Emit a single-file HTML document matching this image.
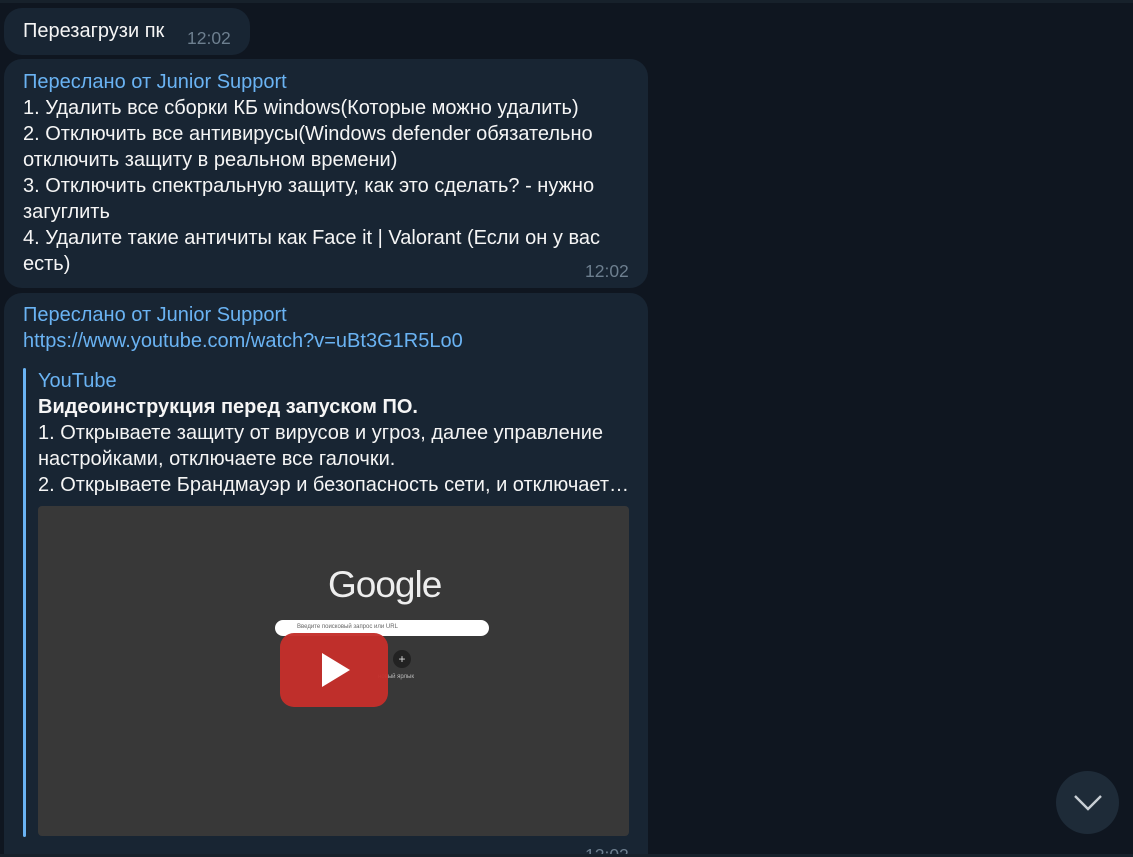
<!DOCTYPE html>
<html style="width:1133px;height:857px;overflow:hidden"><head><meta charset="utf-8"><style>
*{margin:0;padding:0;box-sizing:border-box}
body{width:1133px;height:857px;background:#0f1620;font-family:"Liberation Sans","DejaVu Sans",sans-serif;color:#f5f5f5;position:relative;overflow:hidden;font-size:20px}
.topbar{position:absolute;left:0;top:0;width:1133px;height:3px;background:#17212b}
.b{position:absolute;background:#182533;border-radius:18px}
.t{position:absolute;line-height:26px;white-space:nowrap}
.fw{color:#6ab3f3}
.time{position:absolute;color:#6d7f8f;font-size:17.5px}
</style></head><body>
<div class="topbar"></div>
<div class="b" style="left:4px;top:8px;width:246px;height:47px"></div>
<div class="t" style="left:23px;top:18px">Перезагрузи пк</div>
<div class="time" style="left:187px;top:28px">12:02</div>

<div class="b" style="left:4px;top:59px;width:644px;height:229px"></div>
<div class="t" style="left:23px;top:69px"><span class="fw">Переслано от Junior Support</span><br>1. Удалить все сборки КБ windows(Которые можно удалить)<br>2. Отключить все антивирусы(Windows defender обязательно<br>отключить защиту в реальном времени)<br>3. Отключить спектральную защиту, как это сделать? - нужно<br>загуглить<br>4. Удалите такие античиты как Face it | Valorant (Если он у вас<br>есть)</div>
<div class="time" style="left:585px;top:261px">12:02</div>

<div class="b" style="left:4px;top:293px;width:644px;height:600px"></div>
<div class="t" style="left:23px;top:302px"><span class="fw">Переслано от Junior Support</span><br><span class="fw">https://www.youtube.com/watch?v=uBt3G1R5Lo0</span></div>
<div style="position:absolute;left:23px;top:368px;width:3px;height:469px;background:#6ab3f3;border-radius:2px"></div>
<div class="t" style="left:38px;top:368px"><span class="fw">YouTube</span><br><b>Видеоинструкция перед запуском ПО.</b><br>1. Открываете защиту от вирусов и угроз, далее управление<br>настройками, отключаете все галочки.<br>2. Открываете Брандмауэр и безопасность сети, и отключает…</div>
<div style="position:absolute;left:38px;top:506px;width:591px;height:330px;background:#383838;border-radius:4px;overflow:hidden">
 <div style="position:absolute;left:290px;top:58px;font-size:37px;color:#eee;letter-spacing:-1px">Google</div>
 <div style="position:absolute;left:237px;top:114px;width:214px;height:16px;background:#fff;border-radius:8px;font-size:6px;color:#666;padding:4px 0 0 22px">Введите поисковый запрос или URL</div>
 <div style="position:absolute;left:355px;top:144px;width:18px;height:18px;border-radius:50%;background:#222;color:#ddd;font-size:12px;text-align:center;line-height:18px">+</div>
 <div style="position:absolute;left:340px;top:168px;font-size:6px;color:#bbb">новый ярлык</div>
 <div style="position:absolute;left:242px;top:127px;width:108px;height:74px;background:#c4302b;border-radius:14px;opacity:.97"></div>
 <svg style="position:absolute;left:284px;top:147px" width="28" height="34"><polygon points="0,0 28,17 0,34" fill="#fff"/></svg>
</div>
<div class="time" style="left:585px;top:845px">12:02</div>

<div style="position:absolute;left:1056px;top:771px;width:63px;height:63px;border-radius:50%;background:#1e2b38"></div>
<svg style="position:absolute;left:1070px;top:790px" width="36" height="26"><polyline points="5,6 18,19 31,6" fill="none" stroke="#c8ced4" stroke-width="2.4"/></svg>
<div style="position:absolute;left:0;top:854px;width:1133px;height:3px;background:#17212b"></div>
</body></html>
